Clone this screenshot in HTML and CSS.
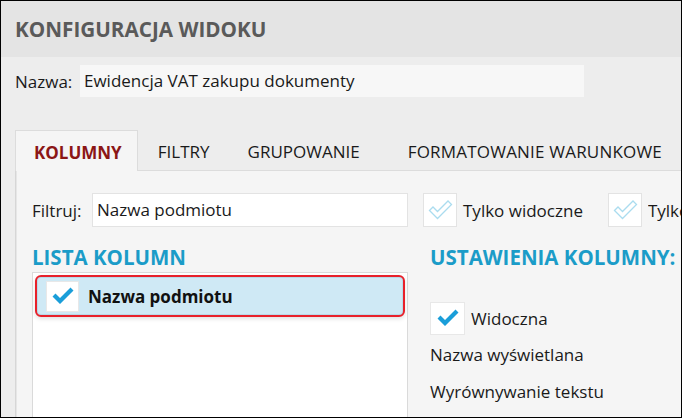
FILE: index.html
```html
<!DOCTYPE html>
<html lang="pl">
<head>
<meta charset="utf-8">
<title>Konfiguracja widoku</title>
<link rel="stylesheet" href="styles.css">
</head>
<body>
<div class="window">
  <header class="header">
    <h1 class="title">KONFIGURACJA WIDOKU</h1>
  </header>
  <div class="name-row">
    <span class="name-label">Nazwa:</span>
    <div class="name-input">Ewidencja VAT zakupu dokumenty</div>
  </div>
  <nav class="tabs">
    <div class="tab tab-active">KOLUMNY</div>
    <div class="tab tab-filtry">FILTRY</div>
    <div class="tab tab-grup">GRUPOWANIE</div>
    <div class="tab tab-format">FORMATOWANIE WARUNKOWE</div>
  </nav>
  <section class="panel">
    <div class="filter-row">
      <span class="filter-label">Filtruj:</span>
      <div class="filter-input">Nazwa podmiotu</div>
      <span class="cb cb-light cb-first">
        <svg viewBox="0 0 26 24" width="26" height="24"><path d="M2.5 12.5 L6 9 L10.5 13.5 L21 3 L24.5 6.5 L10.5 20.5 Z" fill="none" stroke="#aadcef" stroke-width="1.3" stroke-linejoin="miter"/></svg>
      </span>
      <span class="cb-text">Tylko widoczne</span>
      <span class="cb cb-light cb-second">
        <svg viewBox="0 0 26 24" width="26" height="24"><path d="M2.5 12.5 L6 9 L10.5 13.5 L21 3 L24.5 6.5 L10.5 20.5 Z" fill="none" stroke="#aadcef" stroke-width="1.3" stroke-linejoin="miter"/></svg>
      </span>
      <span class="cb-text cb-clipped">Tylko zaznaczone</span>
    </div>
    <div class="columns">
      <div class="col-left">
        <h2 class="section-title">LISTA KOLUMN</h2>
        <div class="list">
          <div class="list-row">
            <span class="cb cb-small">
              <svg viewBox="0 0 22 19" width="22" height="19"><path d="M0.5 9.5 L3.5 6.5 L8 11 L18.5 0.5 L21.5 3.5 L8 17 Z" fill="#1a9ed9"/></svg>
            </span>
            <span class="row-text">Nazwa podmiotu</span>
          </div>
        </div>
      </div>
      <div class="col-right">
        <h2 class="section-title">USTAWIENIA KOLUMNY:</h2>
        <div class="visible-row">
          <span class="cb cb-small cb-visible">
            <svg viewBox="0 0 22 19" width="22" height="19"><path d="M0.5 9.5 L3.5 6.5 L8 11 L18.5 0.5 L21.5 3.5 L8 17 Z" fill="#1a9ed9"/></svg>
          </span>
          <span class="cb-text">Widoczna</span>
        </div>
        <div class="prop">Nazwa wyświetlana</div>
        <div class="prop">Wyrównywanie tekstu</div>
      </div>
    </div>
  </section>
</div>
</body>
</html>
```

FILE: styles.css
```css
* { box-sizing: border-box; }
html, body { margin: 0; padding: 0; }
body {
  font-family: "Open Sans", "Noto Sans", sans-serif;
  color: #1a1a1a;
  background: #ffffff;
}
.window {
  width: 682px;
  height: 418px;
  border: 1px solid #000;
  background: #ededed;
  overflow: hidden;
  display: flex;
  flex-direction: column;
}
.header {
  height: 56px;
  flex: none;
  background: #e4e4e4;
  display: flex;
  align-items: center;
  padding-left: 14px;
}
.title {
  margin: 0;
  font-size: 20.7px;
  font-weight: 700;
  color: #5a5a5a;
  white-space: nowrap;
}
.name-row {
  display: flex;
  align-items: center;
  margin-top: 8px;
  padding-left: 14px;
  height: 32px;
  flex: none;
}
.name-label {
  font-size: 17px;
  width: 65px;
  flex: none;
}
.name-input {
  width: 504px;
  height: 32px;
  background: #f7f7f7;
  font-size: 17px;
  padding-left: 4px;
  line-height: 31px;
  white-space: nowrap;
}
.tabs {
  display: flex;
  margin-top: 33px;
  margin-left: 14px;
  height: 40px;
  flex: none;
  font-size: 17px;
  white-space: nowrap;
}
.tab {
  display: flex;
  align-items: center;
  padding: 2px 19px 0 19px;
  color: #1a1a1a;
}
.tab-active {
  width: 124px;
  background: #f5f5f5;
  border: 1px solid #dcdcdc;
  border-bottom: none;
  color: #8b1616;
  font-weight: 700;
  padding: 2px 0 0 18px;
  position: relative;
  z-index: 1;
  margin-bottom: -1px;
  height: 41px;
}
.tab-filtry { padding-left: 20px; }
.tab-format { padding-left: 29px; letter-spacing: 0.2px; }
.panel {
  flex: 1;
  margin-left: 14px;
  background: #f5f5f5;
  border-top: 1px solid #dcdcdc;
  border-left: 1px solid #d6d6d6;
  box-shadow: inset 1px 0 0 #e6e6e6;
  padding: 22px 0 0 16px;
  min-height: 0;
  display: flex;
  flex-direction: column;
}
.filter-row {
  display: flex;
  align-items: center;
  height: 34px;
  flex: none;
  white-space: nowrap;
  font-size: 17px;
}
.filter-label { width: 60px; flex: none; }
.filter-input {
  width: 316px;
  height: 34px;
  flex: none;
  background: #fff;
  border: 1px solid #e3e3e3;
  padding-left: 4px;
  line-height: 31px;
}
.cb {
  display: flex;
  align-items: center;
  justify-content: center;
  background: #fff;
  border: 1px solid #e3e3e3;
  flex: none;
}
.cb-light { width: 34px; height: 34px; }
.cb-first { margin-left: 15px; }
.cb-second { margin-left: 25px; }
.cb-text { margin-left: 6px; font-size: 17px; }
.cb-clipped { overflow: hidden; min-width: 0; }
.columns {
  display: flex;
  flex: 1;
  min-height: 0;
  margin-top: 18px;
}
.col-left {
  width: 376px;
  flex: none;
  display: flex;
  flex-direction: column;
}
.col-right {
  margin-left: 22px;
  white-space: nowrap;
}
.section-title {
  margin: 0;
  font-size: 20.5px;
  font-weight: 700;
  color: #1b9cc8;
  line-height: 24px;
  white-space: nowrap;
}
.list {
  flex: 1;
  margin-top: 3px;
  background: #fff;
  border: 1px solid #dadada;
  border-bottom: none;
  padding: 2px 2px 0 2px;
}
.list-row {
  height: 42px;
  border: 2px solid #e8202a;
  border-radius: 6px;
  background: #cfe9f5;
  box-shadow: inset 0 0 0 1px #b9d9e8, 0 2px 4px rgba(0,0,0,0.12);
  display: flex;
  align-items: center;
  padding-left: 9px;
}
.cb-small { width: 33px; height: 31px; border-color: #e8e8e8; }
.row-text {
  margin-left: 9px;
  font-size: 17px;
  font-weight: 700;
  color: #111;
}
.visible-row {
  display: flex;
  align-items: center;
  margin-top: 33px;
}
.cb-visible { width: 35px; height: 33px; }
.prop {
  font-size: 17px;
  margin-top: 9px;
  line-height: 22px;
}
.prop + .prop { margin-top: 15px; }
```
